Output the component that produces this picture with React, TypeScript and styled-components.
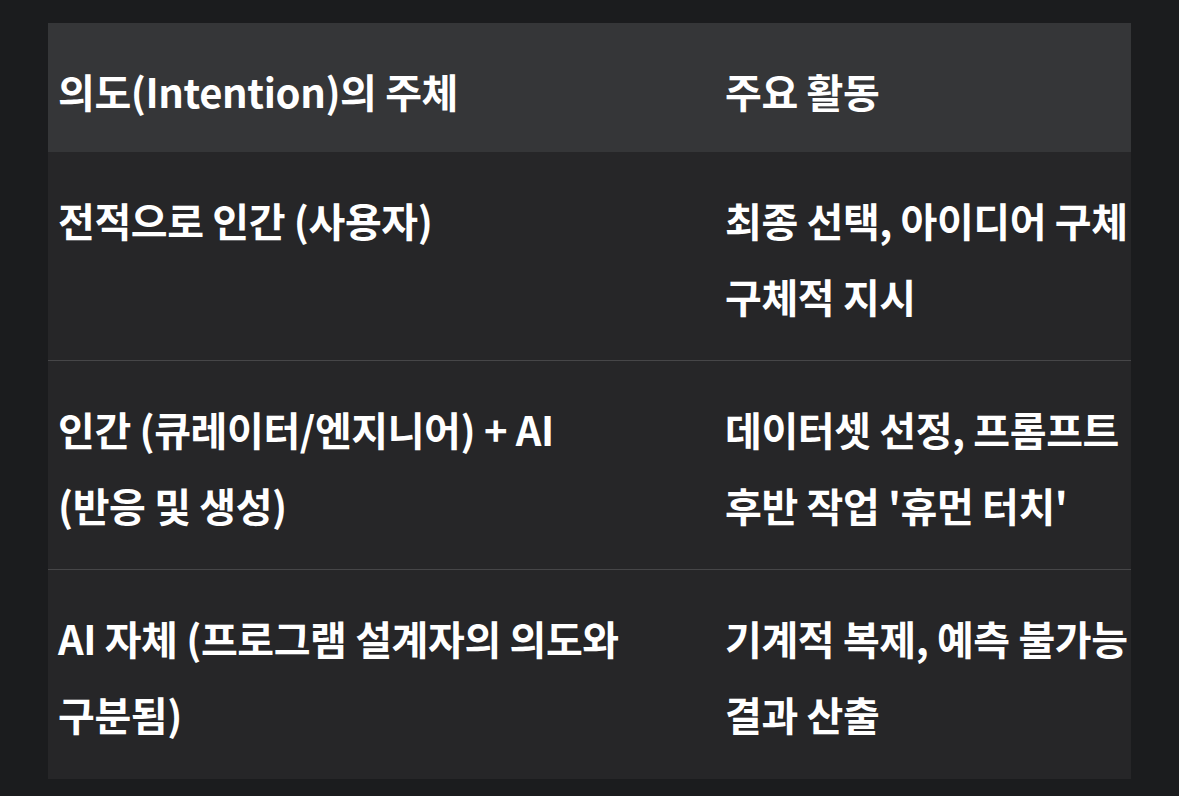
import React from "react";
import styled, { createGlobalStyle } from "styled-components";

const GlobalStyle = createGlobalStyle`
  html, body {
    margin: 0;
    padding: 0;
    background: #1b1c1e;
  }
  body {
    font-family: "Noto Sans CJK KR", "Noto Sans", sans-serif;
  }
`;

const Page = styled.div`
  width: 1179px;
  height: 796px;
  box-sizing: border-box;
  padding: 23px 48px 17px 48px;
  background: #1b1c1e;
`;

const ScrollBox = styled.div`
  width: 100%;
  overflow: hidden;
  background: #262628;
`;

const Table = styled.table`
  width: 1400px;
  table-layout: fixed;
  border-collapse: collapse;
  color: #ffffff;
  font-size: 40px;
  font-weight: 700;
  line-height: 76px;
  letter-spacing: -0.4px;
  text-align: left;
`;

const HeadRow = styled.tr`
  background: #353638;
`;

const Th = styled.th<{ $w?: number }>`
  width: ${({ $w }) => ($w ? `${$w}px` : "auto")};
  padding: 30px 10px 23px 10px;
  font-weight: 700;
  white-space: nowrap;
  vertical-align: top;
`;

const BodyRow = styled.tr`
  & + & {
    border-top: 1px solid #464648;
  }
  &:last-child td {
    padding-bottom: 27px;
  }
`;

const Td = styled.td`
  padding: 30px 10px 26px 10px;
  white-space: nowrap;
  vertical-align: top;
`;

type Row = { who: string[]; what: string[] };

const rows: Row[] = [
  {
    who: ["전적으로 인간 (사용자)"],
    what: ["최종 선택, 아이디어 구체", "구체적 지시"],
  },
  {
    who: ["인간 (큐레이터/엔지니어) + AI", "(반응 및 생성)"],
    what: ["데이터셋 선정, 프롬프트", "후반 작업 '휴먼 터치'"],
  },
  {
    who: ["AI 자체 (프로그램 설계자의 의도와", "구분됨)"],
    what: ["기계적 복제, 예측 불가능", "결과 산출"],
  },
];

const Lines: React.FC<{ lines: string[] }> = ({ lines }) => (
  <>
    {lines.map((l, i) => (
      <React.Fragment key={i}>
        {i > 0 ? <br /> : null}
        {l}
      </React.Fragment>
    ))}
  </>
);

export default function App() {
  return (
    <>
      <GlobalStyle />
      <Page>
        <ScrollBox>
          <Table>
            <thead>
              <HeadRow>
                <Th $w={647}>의도(Intention)의 주체</Th>
                <Th>주요 활동</Th>
              </HeadRow>
            </thead>
            <tbody>
              {rows.map((r, i) => (
                <BodyRow key={i}>
                  <Td>
                    <Lines lines={r.who} />
                  </Td>
                  <Td>
                    <Lines lines={r.what} />
                  </Td>
                </BodyRow>
              ))}
            </tbody>
          </Table>
        </ScrollBox>
      </Page>
    </>
  );
}
